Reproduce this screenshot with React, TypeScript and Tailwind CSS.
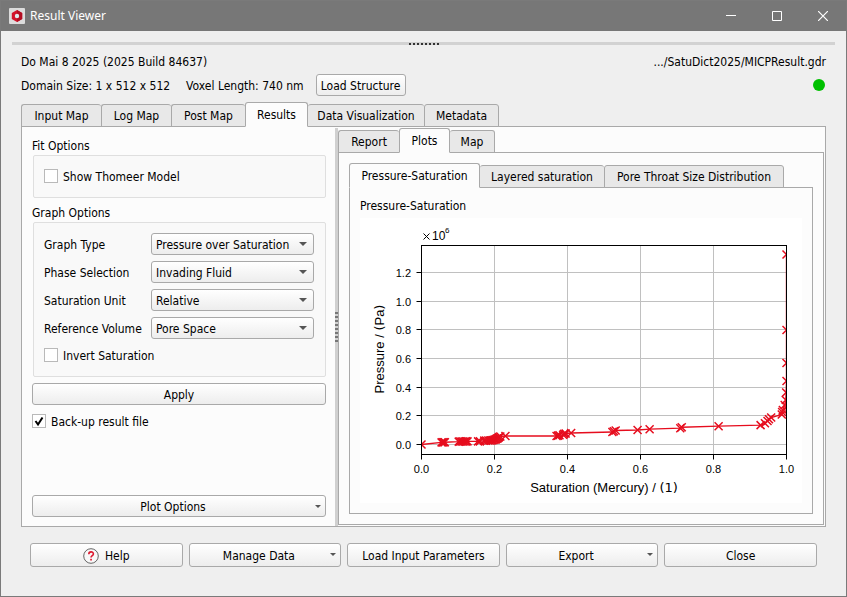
import React, { useState } from 'react';

type Tab = { label: string; width: string };

const MAIN_TABS: Tab[] = [
  { label: 'Input Map', width: 'w-[80px]' },
  { label: 'Log Map', width: 'w-[70px]' },
  { label: 'Post Map', width: 'w-[74px]' },
  { label: 'Results', width: 'w-[63px]' },
  { label: 'Data Visualization', width: 'w-[116px]' },
  { label: 'Metadata', width: 'w-[75px]' },
];

const RESULT_TABS: Tab[] = [
  { label: 'Report', width: 'w-[61px]' },
  { label: 'Plots', width: 'w-[51px]' },
  { label: 'Map', width: 'w-[45px]' },
];

const PLOT_TABS: Tab[] = [
  { label: 'Pressure-Saturation', width: 'w-[131px]' },
  { label: 'Layered saturation', width: 'w-[124px]' },
  { label: 'Pore Throat Size Distribution', width: 'w-[180px]' },
];

const GRAPH_OPTIONS = [
  { id: 'graph-type', label: 'Graph Type', values: ['Pressure over Saturation', 'Saturation over Pressure'] },
  { id: 'phase', label: 'Phase Selection', values: ['Invading Fluid', 'Displaced Fluid'] },
  { id: 'unit', label: 'Saturation Unit', values: ['Relative', 'Percent'] },
  { id: 'volume', label: 'Reference Volume', values: ['Pore Space', 'Domain'] },
];

// [saturation, pressure in MPa]
const DATA: [number, number][] = [
  [0, 0], [0.055, 0.015], [0.058, 0.015], [0.061, 0.016], [0.064, 0.016],
  [0.102, 0.02], [0.106, 0.021], [0.11, 0.021], [0.114, 0.021], [0.118, 0.021], [0.122, 0.022], [0.126, 0.022],
  [0.155, 0.022], [0.16, 0.022], [0.172, 0.027], [0.177, 0.027], [0.183, 0.028], [0.187, 0.028], [0.191, 0.028],
  [0.194, 0.03], [0.197, 0.032], [0.2, 0.034], [0.203, 0.035], [0.205, 0.038], [0.207, 0.042], [0.209, 0.044],
  [0.211, 0.048], [0.213, 0.052], [0.216, 0.056], [0.23, 0.059],
  [0.37, 0.059], [0.374, 0.062], [0.378, 0.064], [0.388, 0.068], [0.391, 0.074], [0.395, 0.077], [0.41, 0.08],
  [0.523, 0.087], [0.527, 0.092], [0.532, 0.098], [0.592, 0.101], [0.625, 0.107],
  [0.709, 0.114], [0.713, 0.12], [0.814, 0.128], [0.929, 0.135], [0.941, 0.148], [0.948, 0.164],
  [0.952, 0.176], [0.958, 0.188], [0.987, 0.21], [0.988, 0.227], [0.99, 0.241], [0.995, 0.276],
  [0.998, 0.31], [0.999, 0.363], [1, 0.443], [1, 0.569], [1, 0.799], [1, 1.326],
];

const PLOT = { left: 61.5, right: 426.5, top: 27.5, bottom: 236.5, zero: 226.5 };
const px = (s: number) => PLOT.left + s * (PLOT.right - PLOT.left);
const py = (p: number) => PLOT.zero - p * 143.3;

const X_TICKS = [0, 0.2, 0.4, 0.6, 0.8, 1];
const Y_TICKS = [0, 0.2, 0.4, 0.6, 0.8, 1, 1.2];

function Chart() {
  return (
    <svg viewBox="0 0 442 285" className="block w-full bg-white font-['Liberation_Sans',sans-serif]" role="img">
      <defs>
        <clipPath id="plot-area">
          <rect x={PLOT.left} y={PLOT.top} width={PLOT.right - PLOT.left} height={PLOT.bottom - PLOT.top} />
        </clipPath>
      </defs>

      {/* Grid, ticks and tick labels */}
      {X_TICKS.map(t => (
        <g key={t}>
          <line x1={px(t)} x2={px(t)} y1={PLOT.top} y2={PLOT.bottom} stroke="#c0c0c0" />
          <line x1={px(t)} x2={px(t)} y1={PLOT.bottom} y2={PLOT.bottom + 5} stroke="#000" />
          <text x={px(t)} y={255} fontSize={11} textAnchor="middle">{t.toFixed(1)}</text>
        </g>
      ))}
      {Y_TICKS.map(t => {
        const y = Math.floor(py(t)) + 0.5;
        return (
          <g key={t}>
            <line x1={PLOT.left} x2={PLOT.right} y1={y} y2={y} stroke="#c0c0c0" />
            <line x1={PLOT.left - 5} x2={PLOT.left} y1={y} y2={y} stroke="#000" />
            <text x={51} y={y + 4} fontSize={11} textAnchor="end">{t.toFixed(1)}</text>
          </g>
        );
      })}

      <g clipPath="url(#plot-area)" fill="none" stroke="#e60d1e">
        <polyline points={DATA.map(([s, p]) => `${px(s)},${py(p)}`).join(' ')} strokeWidth={1.4} />
        {DATA.map(([s, p], i) => (
          <path key={i} d={`M${px(s) - 4} ${py(p) - 4}l8 8m0 -8l-8 8`} strokeWidth={1.5} />
        ))}
      </g>
      <rect x={PLOT.left} y={PLOT.top} width={PLOT.right - PLOT.left} height={PLOT.bottom - PLOT.top} fill="none" stroke="#000" />

      <path d="M63.5 15.500l6 6m0 -6l-6 6" stroke="#000" />
      <text x={72} y={22} fontSize={12}>10</text>
      <text x={85} y={15} fontSize={8}>6</text>
      <text x={244} y={274} fontSize={13} textAnchor="middle">
        Saturation (Mercury) / <tspan className="font-['DejaVu_Sans',sans-serif]">(1)</tspan>
      </text>
      <text transform="translate(24 131) rotate(-90)" fontSize={13} textAnchor="middle">
        Pressure / <tspan className="font-['DejaVu_Sans',sans-serif]">(</tspan>Pa<tspan className="font-['DejaVu_Sans',sans-serif]">)</tspan>
      </text>
    </svg>
  );
}

function TabBar({ tabs, initial }: { tabs: Tab[]; initial: number }) {
  const [active, setActive] = useState(initial);
  return (
    <div role="tablist" className="relative -mb-px flex h-[25px] items-end">
      {tabs.map((tab, i) => (
        <button
          key={tab.label}
          role="tab"
          aria-selected={i === active}
          onClick={() => setActive(i)}
          className={`${tab.width} shrink-0 rounded-t-[3px] border border-[#a9a9a9] whitespace-nowrap ${
            i === active ? 'h-[25px] border-b-[#fcfcfc] bg-[#fcfcfc] pt-px' : 'h-[23px] bg-[#e8e8e8] pt-px'
          } ${i < tabs.length - 1 && i !== active ? 'border-r-0' : ''} ${i > 0 && i - 1 === active ? 'border-l-0' : ''}`}
        >
          {tab.label}
        </button>
      ))}
    </div>
  );
}

function Caret({ small }: { small?: boolean }) {
  return (
    <svg
      viewBox="0 0 8 4"
      className={`pointer-events-none absolute ${small ? 'right-1 top-[9px] h-[3px] w-[6px]' : 'right-[7px] top-[9px] h-1 w-2'}`}
    >
      <path d="M0 0h8L4 4z" fill="#555" />
    </svg>
  );
}

interface PushButtonProps {
  children: React.ReactNode;
  className?: string;
  menu?: boolean;
}

function PushButton({ children, className = '', menu }: PushButtonProps) {
  return (
    <button
      className={`relative flex items-center justify-center rounded-[3px] border border-[#a9a9a9] bg-linear-to-b from-white to-[#ededed] pt-px whitespace-nowrap ${className}`}
    >
      <span className={`flex items-center gap-[6px] ${menu ? 'pr-3' : ''}`}>{children}</span>
      {menu && <Caret small />}
    </button>
  );
}

function CheckBox({ label, checked }: { label: string; checked?: boolean }) {
  return (
    <label className="flex h-4 items-center gap-[5px]">
      <span className="relative flex">
        <input
          type="checkbox"
          defaultChecked={checked}
          className="peer h-[14px] w-[14px] appearance-none border border-[#b9b9b9] bg-white"
        />
        <svg viewBox="0 0 14 14" className="pointer-events-none absolute inset-0 hidden h-[14px] w-[14px] peer-checked:block">
          <path d="M3.500 7L6 10.500L10.500 3.500" fill="none" stroke="#000" strokeWidth={2} />
        </svg>
      </span>
      <span className="pt-px">{label}</span>
    </label>
  );
}

function TitleBar() {
  return (
    <header className="flex h-[30px] items-center bg-[#777] pl-2 text-white">
      <svg viewBox="0 0 16 16" className="h-4 w-4">
        <rect width="16" height="16" rx="1" fill="#dcdcdc" />
        <path d="M8 2L13.200 5v6L8 14L2.800 11V5z" fill="#d3122a" />
        <path d="M8 2L13.200 5v6L8 14z" fill="#b30d22" />
        <circle cx="8" cy="8" r="2.200" fill="#dfe8ec" />
      </svg>
      <h1 className="ml-[5px] flex-1 font-['Noto_Sans',sans-serif] text-[12px]">Result Viewer</h1>
      <button aria-label="Minimize" className="flex h-full w-[46px] items-center justify-center">
        <svg viewBox="0 0 10 10" className="h-[10px] w-[10px]"><path d="M0 4.500h10" stroke="#fff" /></svg>
      </button>
      <button aria-label="Maximize" className="flex h-full w-[46px] items-center justify-center">
        <svg viewBox="0 0 10 10" className="h-[10px] w-[10px]"><path d="M.5.5h9v9h-9z" fill="none" stroke="#fff" /></svg>
      </button>
      <button aria-label="Close window" className="flex h-full w-[46px] items-center justify-center">
        <svg viewBox="0 0 10 10" className="h-[10px] w-[10px]"><path d="M0 0l10 10M10 0L0 10" stroke="#fff" strokeWidth={1.200} /></svg>
      </button>
    </header>
  );
}

function OptionsPanel() {
  return (
    <section className="flex w-[313px] shrink-0 flex-col pt-[11px] pr-[9px] pb-[9px] pl-[10px]">
      <h2>Fit Options</h2>
      <div className="mt-px ml-px h-[43px] rounded-xs border border-[#dfdfdf] bg-[#f9f9f9] pt-3 pl-[10px]">
        <CheckBox label="Show Thomeer Model" />
      </div>
      <h2 className="mt-[7px]">Graph Options</h2>
      <div className="mt-px ml-px flex flex-col gap-[6px] rounded-xs border border-[#dfdfdf] bg-[#f9f9f9] pt-[10px] pr-[11px] pb-[13px] pl-[10px]">
        {GRAPH_OPTIONS.map(option => (
          <div key={option.id} className="flex items-center">
            <label htmlFor={option.id} className="w-[107px] pt-px whitespace-nowrap">{option.label}</label>
            <div className="relative flex-1">
              <select
                id={option.id}
                className="block h-[22px] w-full appearance-none rounded-[3px] border border-[#a9a9a9] bg-linear-to-b from-white to-[#ededed] pt-px pl-1"
              >
                {option.values.map(value => <option key={value}>{value}</option>)}
              </select>
              <Caret />
            </div>
          </div>
        ))}
        <div className="mt-[2px]">
          <CheckBox label="Invert Saturation" />
        </div>
      </div>
      <PushButton className="mt-[6px] h-[22px] w-full">Apply</PushButton>
      <div className="mt-2">
        <CheckBox label="Back-up result file" checked />
      </div>
      <PushButton menu className="mt-auto h-[22px] w-full">Plot Options</PushButton>
    </section>
  );
}

export default function App() {
  return (
    <div className="flex min-h-screen flex-col border border-[#7a7a7a] bg-[#efefef] font-['DejaVu_Sans_Condensed','Noto_Sans',sans-serif] text-[12px] leading-4 text-black">
      <TitleBar />

      <div className="mx-[11px] mt-[11px] flex h-[3px] items-center justify-center gap-[2px] bg-[#d2d2d2]">
        {Array.from({ length: 8 }, (_, i) => <i key={i} className="h-[2px] w-[2px] bg-[#333]" />)}
      </div>

      <main className="flex flex-1 flex-col px-5 pt-[9px]">
        <div className="flex justify-between">
          <p>Do Mai 8 2025 (2025 Build 84637)</p>
          <p>.../SatuDict2025/MICPResult.gdr</p>
        </div>
        <div className="mt-1 flex items-center">
          <p className="pt-px">Domain Size: 1 x 512 x 512</p>
          <p className="ml-4 pt-px">Voxel Length: 740 nm</p>
          <PushButton className="ml-3 h-[22px] w-[90px]">Load Structure</PushButton>
          <span className="mr-px ml-auto h-3 w-3 rounded-full bg-[#00c000]" />
        </div>

        <div className="mt-[6px] flex flex-1 flex-col">
          <TabBar tabs={MAIN_TABS} initial={3} />
          <div className="flex flex-1 border border-[#a9a9a9] bg-[#fcfcfc]">
            <OptionsPanel />
            <div className="mt-px flex w-[3px] shrink-0 flex-col items-center justify-center gap-[2px] bg-[#d0d0d0]">
              {Array.from({ length: 8 }, (_, i) => <i key={i} className="h-[2px] w-[3px] bg-[#777]" />)}
            </div>
            <section className="flex min-w-0 flex-1 flex-col pt-px pr-px pb-px">
              <TabBar tabs={RESULT_TABS} initial={1} />
              <div className="flex flex-1 flex-col border border-[#a9a9a9] bg-[#fcfcfc] px-[10px] py-[10px]">
                <TabBar tabs={PLOT_TABS} initial={0} />
                <div className="flex-1 border border-[#a9a9a9] bg-[#fcfcfc] px-[10px] pt-[10px] pb-[10px]">
                  <h3 className="mb-1">Pressure-Saturation</h3>
                  <Chart />
                </div>
              </div>
            </section>
          </div>
        </div>

        <footer className="mt-4 mb-[29px] flex gap-[6px] px-[9px]">
          <PushButton className="h-6 flex-1">
            <svg viewBox="0 0 16 16" className="h-4 w-4">
              <circle cx="8" cy="8" r="7.3" fill="#f8f8f8" stroke="#666" />
              <path d="M5.8 6.2c0-3 4.6-3 4.6-.3C10.400 7.600 8 7.700 8 9.500" fill="none" stroke="#dd1a30" strokeWidth={1.6} />
              <rect x="7.200" y="10.800" width="1.700" height="1.700" fill="#dd1a30" />
            </svg>
            Help
          </PushButton>
          <PushButton menu className="h-6 flex-1">Manage Data</PushButton>
          <PushButton className="h-6 flex-1">Load Input Parameters</PushButton>
          <PushButton menu className="h-6 flex-1">Export</PushButton>
          <PushButton className="h-6 flex-1">Close</PushButton>
        </footer>
      </main>
    </div>
  );
}
